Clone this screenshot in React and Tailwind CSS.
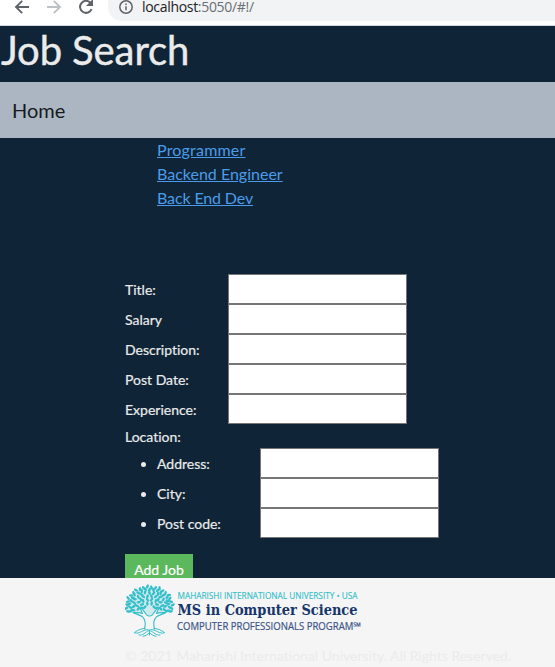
import React from "react";

const jobs = [
  { name: "Programmer", spacing: "tracking-[0.2px]" },
  { name: "Backend Engineer", spacing: "tracking-normal" },
  { name: "Back End Dev", spacing: "tracking-[-0.13px]" },
];
const fields = ["Title:", "Salary", "Description:", "Post Date:", "Experience:"];
const locationFields = ["Address:", "City:", "Post code:"];

function BrowserBar() {
  return (
    <div className="flex h-[26px] border-b border-[#d5d8dc] bg-white">
      <svg className="h-[25px] w-[108px] shrink-0" viewBox="0 0 108 25" fill="none">
        <g strokeWidth="1.9">
          <path d="M29 7H16.5M22.2 .8L16 7l6.2 6.2" stroke="#5f6368" />
          <path d="M47 7h12.5M53.8 .8L60 7l-6.2 6.2" stroke="#bdc1c6" />
          <path d="M91.6 9.2A6 6 0 1 1 90.5 2.8L92 4.5" stroke="#5f6368" strokeWidth="2" />
        </g>
        <path d="M93 -1v7h-7z" fill="#5f6368" />
      </svg>
      <div className="flex h-[21px] flex-1 rounded-bl-[14px] bg-[#f1f3f4] pl-[10px]">
        <svg className="h-4 w-4" viewBox="0 0 16 16" fill="none">
          <circle cx="8" cy="7" r="6.2" stroke="#5f6368" strokeWidth="1.5" />
          <path d="M8 6.3v4M8 3.5v1.6" stroke="#5f6368" strokeWidth="1.5" />
        </svg>
        <span className="ml-2 h-[14px] font-['Open_Sans','Noto_Sans',sans-serif] text-[14px] leading-[14px] tracking-[-0.31px] text-[#6b6f74]">
          <span className="text-[#202124]">localhost</span>:5050/#!/
        </span>
      </div>
    </div>
  );
}

// Leaves fan out in rings; alternating tilts keep the crown irregular.
const leaves = [];
[
  { r: 4, n: 4 },
  { r: 8, n: 8 },
  { r: 12, n: 12 },
  { r: 16, n: 15 },
  { r: 19.5, n: 19 },
  { r: 22.5, n: 22 },
].forEach(({ r, n }, ring) => {
  for (let i = 0; i < n; i++) {
    const angle = -197 + (214 * i) / (n - 1);
    const rad = (angle * Math.PI) / 180;
    const radius = r + ((i + ring) % 3 === 0 ? 0.9 : -0.3);
    leaves.push({
      x: 24.5 + Math.cos(rad) * radius,
      y: 22 + Math.sin(rad) * radius * 0.84,
      tilt: angle + ((i + ring) % 2 ? 28 : -28),
    });
  }
});

function Tree() {
  return (
    <svg className="h-[54px] w-[50px] shrink-0" viewBox="0 0 50 54" fill="none">
      <path
        d="M1.500 27C1 13 11 3 24.500 3S48 13 47.500 27c-5 3-10 2-14 4H15.500c-4-2-9-1-14-4z"
        fill="#35bfca"
        fillOpacity=".2"
      />
      <g fill="#35bfca">
        {leaves.map((leaf, i) => (
          <ellipse
            key={i}
            cx={leaf.x}
            cy={leaf.y}
            rx="2.2"
            ry="1.25"
            transform={`rotate(${leaf.tilt} ${leaf.x} ${leaf.y})`}
          />
        ))}
      </g>
      <g stroke="#35bfca" strokeWidth="1.1" strokeLinecap="round" strokeLinejoin="round">
        <path
          fill="#f5f5f5"
          d="M19.500 45c1.600-6 1-9.500-2-12.200-3-2.300-6-2.300-9.500-4.300 3.500 .3 7 0 9.500 .9-.9-3-2.500-5-4-7 3 1.800 6 4.600 8 8.400 1 .9 1.800 1.200 3 1.200s2-.3 3-1.200c2-3.800 5-6.600 8-8.400-1.500 2-3.100 4-4 7 2.500-.9 6-.6 9.500-.9-3.500 2-6.500 2-9.500 4.300-3 2.700-3.600 6.200-2 12.200"
        />
        <path
          strokeWidth="1"
          d="M9.500 48.500c4-3 7.500-4 10.500-4M39.500 48.500c-4-3-7.500-4-10.500-4M10 49c5 1 7-3 13-3.500M39 49c-5 1-7-3-13-3.500M14 51c4 1 6-3 10-4.500M35 51c-4 1-6-3-10-4.500M18 52.300c3-.5 5-2 6.500-4 1.500 2 3.500 3.500 6.500 4M24.500 46v5"
        />
      </g>
    </svg>
  );
}

function Logo() {
  return (
    <div className="flex h-[54px]">
      <Tree />
      <svg className="h-[54px] w-[200px]" viewBox="0 0 200 54">
        <g fontFamily="'Open Sans','Noto Sans',sans-serif">
          <text x="2.5" y="14.6" fontSize="8.6" fontWeight="500" fill="#35bfca" stroke="#35bfca" strokeWidth=".15" textLength="180" lengthAdjust="spacingAndGlyphs">
            MAHARISHI INTERNATIONAL UNIVERSITY • USA
          </text>
          <text x="2" y="45.8" fontSize="10.5" fill="#3b5488" stroke="#3b5488" strokeWidth=".2" textLength="184" lengthAdjust="spacingAndGlyphs">
            COMPUTER PROFESSIONALS PROGRAM℠
          </text>
        </g>
        <text
          x="2.5"
          y="31.4"
          fontFamily="'DejaVu Serif',serif"
          fontSize="14.4"
          fontWeight="700"
          fill="#15356b"
          textLength="180"
          lengthAdjust="spacingAndGlyphs"
        >
          MS in Computer Science
        </text>
      </svg>
    </div>
  );
}

function Field({ label }) {
  return (
    <label className="flex h-[30px] items-center">
      <span className="w-[103px]">{label}</span>
      <input className="h-[30px] w-[179px] border border-[#767676] bg-white px-0.5 text-black outline-none" />
    </label>
  );
}

export default function App() {
  return (
    <div className="flex h-[667px] w-[555px] flex-col overflow-hidden bg-[#0f2537] font-['Lato',sans-serif] text-[#ebebeb] [font-variant-ligatures:none]">
      <BrowserBar />
      <main className="h-[552px] shrink-0 overflow-hidden">
        <h1 className="h-14 pl-px text-[40px] leading-[48px] tracking-[-0.1px] [-webkit-text-stroke:0.4px_#ebebeb]">
          Job Search
        </h1>
        <nav className="flex h-14 items-center bg-[#abb6c2] pl-3 text-[20px] leading-[30px] text-[#161a1e]">
          <a>Home</a>
        </nav>
        <ul className="h-[136px] pl-[157px] text-[16px] leading-6">
          {jobs.map((job) => (
            <li key={job.name} className={job.spacing}>
              <a className="text-[#4c9be8] underline">{job.name}</a>
            </li>
          ))}
        </ul>
        <form className="pl-[125px] text-[14px] leading-[21px] [-webkit-text-stroke:0.2px]">
          {fields.map((label) => (
            <Field key={label} label={label} />
          ))}
          <div className="h-6 pt-[2px]">Location:</div>
          <ul className="list-disc pl-8">
            {locationFields.map((label) => (
              <li key={label}>
                <Field label={label} />
              </li>
            ))}
          </ul>
          <button type="button" className="mt-4 h-[33px] w-[68px] bg-[#5cb85c] pb-[2px] text-white">
            Add Job
          </button>
        </form>
      </main>
      <footer className="flex-1 bg-[#f5f5f5] pl-[125px] pt-[6px]">
        <Logo />
        <p className="mt-[7px] text-[14px] leading-[21px] text-[#ebebeb]">
          © 2021 Maharishi International University. All Rights Reserved.
        </p>
      </footer>
    </div>
  );
}
